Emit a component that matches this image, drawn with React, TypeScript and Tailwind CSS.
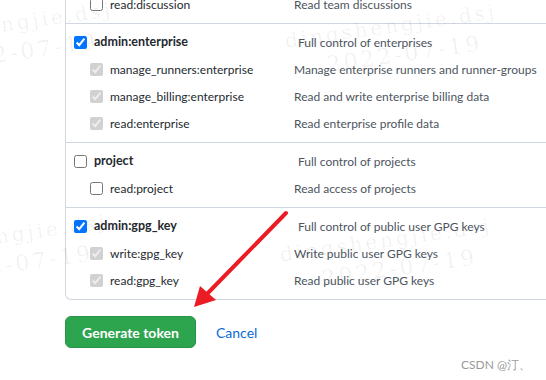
import React from 'react'

interface Scope {
  name: string
  description: string
  checked: boolean
  parent?: boolean
}

const groups: Scope[][] = [
  [
    { name: 'admin:enterprise', description: 'Full control of enterprises', checked: true, parent: true },
    { name: 'manage_runners:enterprise', description: 'Manage enterprise runners and runner-groups', checked: true },
    { name: 'manage_billing:enterprise', description: 'Read and write enterprise billing data', checked: true },
    { name: 'read:enterprise', description: 'Read enterprise profile data', checked: true },
  ],
  [
    { name: 'project', description: 'Full control of projects', checked: false, parent: true },
    { name: 'read:project', description: 'Read access of projects', checked: false },
  ],
  [
    { name: 'admin:gpg_key', description: 'Full control of public user GPG keys', checked: true, parent: true },
    { name: 'write:gpg_key', description: 'Write public user GPG keys', checked: true },
    { name: 'read:gpg_key', description: 'Read public user GPG keys', checked: true },
  ],
]

function ScopeRow({ scope, disabled }: { scope: Scope; disabled: boolean }) {
  return (
    <div className="flex items-center h-[27px]">
      <div className={`flex items-center w-[228px] shrink-0 ${scope.parent ? 'pl-[8px]' : 'pl-[24px]'}`}>
        <input
          type="checkbox"
          checked={scope.checked}
          disabled={disabled}
          readOnly
          className="m-0 w-[13px] h-[13px]"
        />
        <span
          className={`ml-[7px] text-[#24292f] ${scope.parent ? 'font-bold text-[12.5px]' : 'text-[12px]'}`}
        >
          {scope.name}
        </span>
      </div>
      <span className={`text-[12px] text-[#4d555e] whitespace-nowrap ${scope.parent ? 'pl-[4px]' : ''}`}>
        {scope.description}
      </span>
    </div>
  )
}

// faint "dingshengjie.dsj / 2022-07-19" stamp laid over the screenshot
function Watermark({ className }: { className: string }) {
  return (
    <div
      className={`absolute pointer-events-none origin-top-left -rotate-[8deg] text-[#000]/[0.06] text-[20px] leading-[30px] tracking-[3px] whitespace-nowrap ${className}`}
      style={{ fontFamily: '"DejaVu Serif", serif' }}
    >
      <div>dingshengjie.dsj</div>
      <div className="pl-[38px] text-[22px]">2022-07-19</div>
    </div>
  )
}

export default function App() {
  return (
    <div
      className="relative w-[546px] h-[380px] overflow-hidden bg-white"
      style={{ fontFamily: 'Lato, "Noto Sans", sans-serif' }}
    >
      <div className="ml-[65px] w-[500px] border-l border-b border-[#d0d7de] rounded-bl-md">
        <div className="-mt-[9px] pb-[5px] border-b border-[#d0d7de]">
          <ScopeRow scope={{ name: 'read:discussion', description: 'Read team discussions', checked: false }} disabled={false} />
        </div>
        {groups.map((group, i) => (
          <div key={i} className={`py-[5px] ${i < groups.length - 1 ? 'border-b border-[#d0d7de]' : ''}`}>
            {group.map((scope) => (
              <ScopeRow key={scope.name} scope={scope} disabled={!scope.parent && scope.checked} />
            ))}
          </div>
        ))}
      </div>

      <div className="ml-[65px] mt-[16px] flex items-center">
        <button className="h-[32px] w-[131px] rounded-md bg-[#2da44e] text-white font-bold text-[14px] border border-[#2a9147]">
          Generate token
        </button>
        <button className="ml-[20px] text-[#0969da] text-[14px]">Cancel</button>
      </div>

      <div className="absolute right-[15px] bottom-[6px] text-[12px] text-[#999]">CSDN @汀、</div>

      <Watermark className="-left-[101px] top-[24px]" />
      <Watermark className="left-[283px] top-[26px]" />
      <Watermark className="-left-[106px] top-[236px]" />
      <Watermark className="left-[278px] top-[240px]" />

      {/* red arrow */}
      <svg className="absolute left-0 top-0 pointer-events-none" width="546" height="380">
        <line x1="286" y1="213" x2="205" y2="296" stroke="#ec1c24" strokeWidth="4" strokeLinecap="round" />
        <polygon points="194,307 200,286 216,300" fill="#ec1c24" />
      </svg>
    </div>
  )
}
